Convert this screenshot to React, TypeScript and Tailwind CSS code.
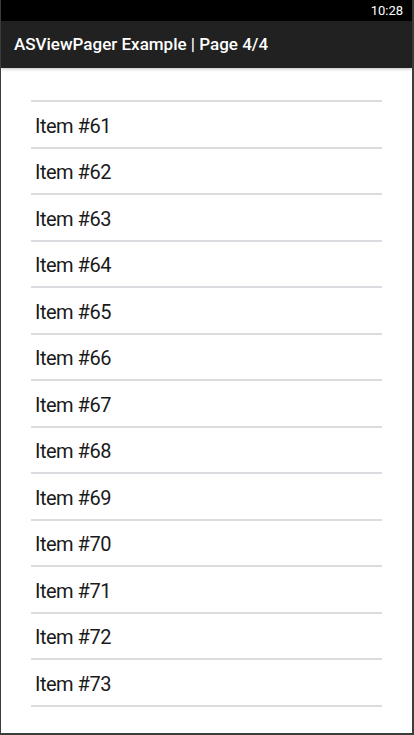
const items = Array.from({ length: 13 }, (_, i) => 61 + i);

function StatusBar() {
  return (
    <div className="flex h-[21px] items-center justify-end bg-black pr-[9px]">
      <span className="text-[13px] leading-none text-white">10:28</span>
    </div>
  );
}

function Toolbar() {
  return (
    <div className="relative z-10 flex h-[47px] items-center bg-[#212121] pl-[13px] shadow-[0_1px_3px_rgba(0,0,0,0.25)]">
      <h1 className="text-[17px] font-medium leading-none text-white">ASViewPager Example | Page 4/4</h1>
    </div>
  );
}

export default function App() {
  return (
    <div
      className="flex h-[735px] w-[414px] flex-col overflow-hidden border-b-2 border-l border-r-2 border-[#3c3c3c] bg-white"
      style={{ fontFamily: 'Roboto, "Noto Sans", sans-serif' }}
    >
      <StatusBar />
      <Toolbar />
      <div className="flex-1 px-[30px] pt-[32px]">
        <div className="border-t-2 border-[#dcdce0]">
          {items.map((n) => (
            <div
              key={n}
              className="flex h-[46.5px] items-center border-b-2 border-[#dcdce0] pl-[4px] pt-[3px] text-[20px] tracking-[-0.5px] text-[#1a1a1a]"
            >
              Item #{n}
            </div>
          ))}
        </div>
      </div>
    </div>
  );
}
